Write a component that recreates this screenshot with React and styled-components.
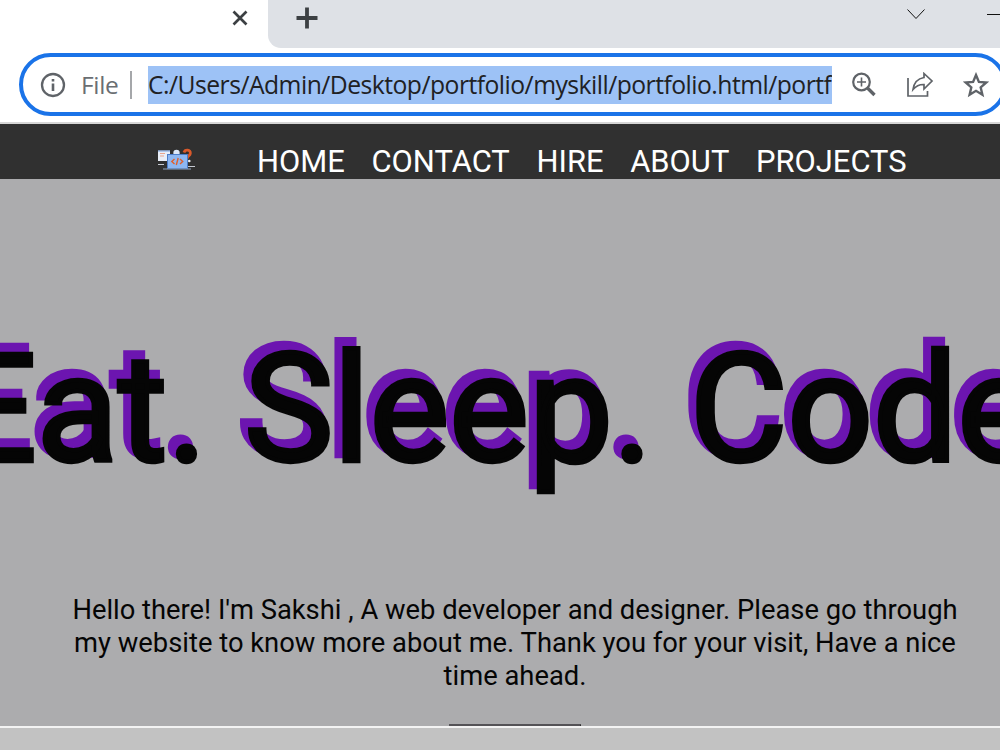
import React from "react";
import styled, { createGlobalStyle } from "styled-components";

const Global = createGlobalStyle`
  * { box-sizing: border-box; }
  body { margin: 0; overflow: hidden; font-family: Roboto, sans-serif; }
`;

const Window = styled.div`
  width: 1000px;
  height: 750px;
  display: flex;
  flex-direction: column;
  overflow: hidden;
  background: #fff;
`;

const TabBar = styled.div`
  height: 48px;
  flex: none;
  display: flex;
`;

const ActiveTab = styled.div`
  width: 268px;
  display: flex;
  justify-content: flex-end;
  padding: 10px 20px 0 0;
`;

const TabStrip = styled.div`
  flex: 1;
  display: flex;
  background: #dee1e6;
  border-bottom-left-radius: 13px;
  padding: 7px 0 0 28px;
`;

const WindowControls = styled.svg`
  margin-left: auto;
`;

const AddressRow = styled.div`
  height: 76px;
  flex: none;
  padding: 5px 0 0 19px;
  border-bottom: 2px solid #d6d6d6;
`;

const AddressBar = styled.div`
  width: 988px;
  height: 63px;
  border: 4px solid #1a73e8;
  border-radius: 32px;
  display: flex;
  align-items: center;
  padding-left: 17px;
  font-family: "Open Sans", sans-serif;
  font-size: 24.7px;
`;

const Scheme = styled.span`
  margin: 0 0 0 15px;
  width: 49px;
  color: #6a6e72;
  font-size: 24.5px;
  letter-spacing: -0.3px;
`;

const Divider = styled.span`
  width: 2px;
  height: 28px;
  background: #a5a7aa;
`;

const Url = styled.span`
  margin: 0 19px 0 16px;
  width: 684px;
  flex: none;
  height: 38px;
  line-height: 38px;
  background: #9dc2f6;
  color: #202124;
  white-space: nowrap;
  overflow: hidden;
  letter-spacing: -0.52px;
`;

const Actions = styled.div`
  display: flex;
  gap: 29px;
`;

const NavBar = styled.nav`
  height: 55px;
  flex: none;
  background: #303030;
  display: flex;
  padding: 24px 0 0 157px;
`;

const NavLinks = styled.div`
  display: flex;
  gap: 26.7px;
  margin-left: 62px;
`;

const NavLink = styled.a`
  color: #fff;
  font-size: 30.9px;
  line-height: 28px;
  height: 28px;
`;

const Hero = styled.main`
  height: 547px;
  flex: none;
  background: #acacae;
  display: flex;
  flex-direction: column;
  align-items: center;
  overflow: hidden;
`;

const Title = styled.h1`
  position: relative;
  z-index: 0;
  margin: 143px 0 0 -48.5px;
  align-self: flex-start;
  height: 176px;
  line-height: 176px;
  white-space: pre;
  font-size: 150px;
  font-weight: 400;
  color: #050505;
  -webkit-text-stroke: 4.4px #050505;

  &::before {
    content: "Eat. Sleep. Code.";
    position: absolute;
    z-index: -1;
    left: -6px;
    top: -7px;
    color: #6c15b0;
    -webkit-text-stroke: 8.4px #6c15b0;
  }
`;

const Intro = styled.p`
  margin: 96px 0 0 30px;
  text-align: center;
  white-space: nowrap;
  font-size: 27.35px;
  line-height: 33px;
  color: #050505;
`;

const ButtonTop = styled.div`
  width: 132px;
  height: 20px;
  margin: 31px 0 0 30px;
  flex: none;
  background: #acacae;
  border-top: 2px solid #555357;
  border-right: 1px solid #222;
`;

const StatusStrip = styled.footer`
  flex: 1;
  background: #c2c2c2;
  border-top: 2px solid #f3f3f3;
`;

const CloseIcon = () => (
  <svg width="16" height="16" viewBox="0 0 16 16" stroke="#3c4043" strokeWidth="2.7">
    <path d="M1.5 1.5 14.5 14.5M14.5 1.5 1.5 14.5" />
  </svg>
);

const PlusIcon = () => (
  <svg width="22" height="22" viewBox="0 0 22 22" stroke="#3c4043" strokeWidth="3.8">
    <path d="M.5 11H21.5M11 .5V21.5" />
  </svg>
);

const InfoIcon = () => (
  <svg width="26" height="26" viewBox="0 0 26 26" fill="none" stroke="#5f6368">
    <circle cx="13" cy="13" r="11" strokeWidth="2.3" />
    <path d="M13 11.5V19M13 7V9.6" strokeWidth="2.6" />
  </svg>
);

const ZoomIcon = () => (
  <svg width="26" height="26" viewBox="0 0 26 26" fill="none" stroke="#5f6368">
    <circle cx="10.5" cy="10" r="8.3" strokeWidth="2.2" />
    <path d="M16.5 16 23.5 23" strokeWidth="3.4" />
    <path d="M6 10H15M10.5 5.5V14.5" strokeWidth="1.6" />
  </svg>
);

const ShareIcon = () => (
  <svg width="28" height="26" viewBox="0 0 28 26" fill="none" stroke="#5f6368" strokeWidth="1.7">
    <path d="M2 6V24H21.5V19" />
    <path d="M18 1.5 26 9 18 17V12.5C13.5 12.3 10 14 7 17.5 8 10.5 12 6.5 18 5.5Z" />
  </svg>
);

const StarIcon = () => (
  <svg width="26" height="26" viewBox="0 0 26 26" fill="none" stroke="#5f6368" strokeWidth="2.4">
    <path d="M13 3 15.9 9.9 23.4 10.5 17.7 15.4 19.4 22.7 13 18.8 6.6 22.7 8.3 15.4 2.6 10.5 10.1 9.9Z" />
  </svg>
);

const LaptopLogo = () => (
  <svg width="38" height="24" viewBox="0 0 38 24" fill="none">
    <rect x="1" y="2.5" width="12" height="10.5" fill="#e9eef8" />
    <path d="M1 3H13" stroke="#7ba0dc" />
    <path d="M3 5.5H8M3 8H7" stroke="#e9a58d" />
    <circle cx="19.5" cy="5" r="3.2" fill="#dce8fa" />
    <path d="M27 4.5C28 1 34 1.3 33.3 5.5 33 8.2 30 7.8 30 11" stroke="#d9592b" strokeWidth="2.8" />
    <rect x="10.5" y="6.5" width="20" height="14" fill="#8db7f2" stroke="#4b7cc9" />
    <path d="M17.5 11 14.8 13.5 17.5 16M23 11 25.7 13.5 23 16M21.2 10 19.3 17" stroke="#e0602d" strokeWidth="1.4" />
    <path d="M6 21H34" stroke="#91a4bd" />
    <path d="M1 16.5H7M31 18.5H38" stroke="#c5cad2" />
    <circle cx="32.3" cy="13" r="1.3" fill="#f0f0f0" />
  </svg>
);

const LINKS = ["HOME", "CONTACT", "HIRE", "ABOUT", "PROJECTS"];

export default function App() {
  return (
    <Window>
      <Global />
      <TabBar>
        <ActiveTab><CloseIcon /></ActiveTab>
        <TabStrip>
          <PlusIcon />
          <WindowControls width="94" height="20" viewBox="0 0 94 20" fill="none" stroke="#111">
            <path d="M1.5 2.5 10 11.5 18.5 2.5" />
            <path d="M81 7.5H94" />
          </WindowControls>
        </TabStrip>
      </TabBar>
      <AddressRow>
        <AddressBar>
          <InfoIcon />
          <Scheme>File</Scheme>
          <Divider />
          <Url>C:/Users/Admin/Desktop/portfolio/myskill/portfolio.html/portfolio.html</Url>
          <Actions>
            <ZoomIcon />
            <ShareIcon />
            <StarIcon />
          </Actions>
        </AddressBar>
      </AddressRow>
      <NavBar>
        <LaptopLogo />
        <NavLinks>
          {LINKS.map((label) => <NavLink key={label}>{label}</NavLink>)}
        </NavLinks>
      </NavBar>
      <Hero>
        <Title>Eat. Sleep. Code.</Title>
        <Intro>
          Hello there! I'm Sakshi , A web developer and designer. Please go through<br />
          my website to know more about me. Thank you for your visit, Have a nice<br />
          time ahead.
        </Intro>
        <ButtonTop />
      </Hero>
      <StatusStrip />
    </Window>
  );
}
